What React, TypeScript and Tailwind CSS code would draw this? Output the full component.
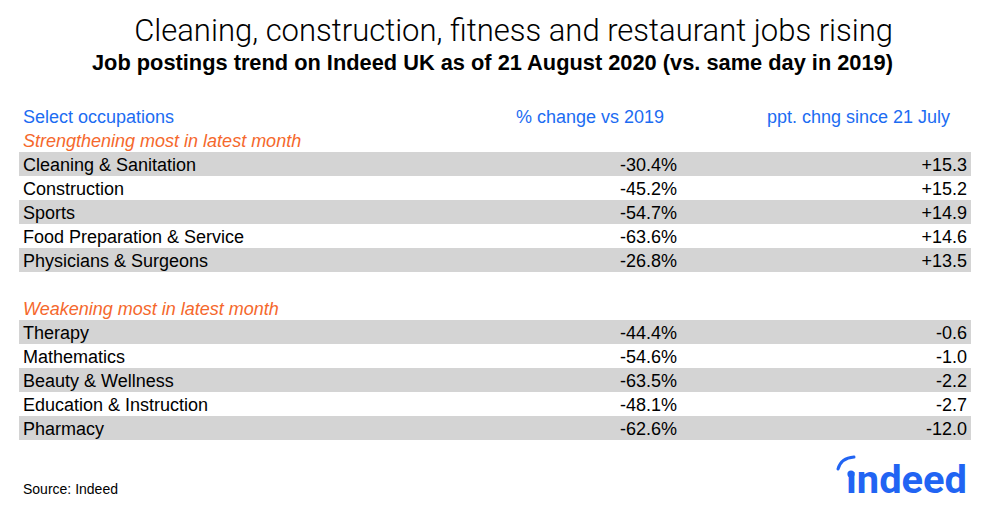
import React from "react";

type Row = { name: string; pct: string; ppt: string };

const strengthening: Row[] = [
  { name: "Cleaning & Sanitation", pct: "-30.4%", ppt: "+15.3" },
  { name: "Construction", pct: "-45.2%", ppt: "+15.2" },
  { name: "Sports", pct: "-54.7%", ppt: "+14.9" },
  { name: "Food Preparation & Service", pct: "-63.6%", ppt: "+14.6" },
  { name: "Physicians & Surgeons", pct: "-26.8%", ppt: "+13.5" },
];

const weakening: Row[] = [
  { name: "Therapy", pct: "-44.4%", ppt: "-0.6" },
  { name: "Mathematics", pct: "-54.6%", ppt: "-1.0" },
  { name: "Beauty & Wellness", pct: "-63.5%", ppt: "-2.2" },
  { name: "Education & Instruction", pct: "-48.1%", ppt: "-2.7" },
  { name: "Pharmacy", pct: "-62.6%", ppt: "-12.0" },
];

function DataRows({ rows }: { rows: Row[] }) {
  return (
    <>
      {rows.map((r, i) => (
        <div
          key={r.name}
          className={`grid grid-cols-[371px_289px_290px] h-[24px] pt-[3px] leading-[21px] text-[18px] text-black ${
            i % 2 === 0 ? "bg-[#d4d4d4]" : "bg-white"
          }`}
        >
          <div className="pl-[4px]">{r.name}</div>
          <div className="text-right pr-[2px]">{r.pct}</div>
          <div className="text-right pr-[2px]">{r.ppt}</div>
        </div>
      ))}
    </>
  );
}

function IndeedLogo() {
  return (
    <svg width="150" height="50" viewBox="0 0 150 50" overflow="visible">
      <path
        d="M8 17 Q11 6 24 5"
        fill="none"
        stroke="#2164f3"
        strokeWidth="3"
        strokeLinecap="round"
      />
      <circle cx="21" cy="22" r="3.6" fill="#2164f3" />
      <text
        x="16"
        y="41"
        fill="#2164f3"
        fontSize="38"
        fontWeight="700"
        fontFamily="Roboto, sans-serif"
        textLength="121"
        lengthAdjust="spacingAndGlyphs"
      >
        ındeed
      </text>
    </svg>
  );
}

export default function App() {
  return (
    <div className="w-[990px] h-[509px] bg-white flex flex-col font-['Liberation_Sans',Arial,sans-serif] overflow-hidden">
      <div className="flex flex-col items-end pr-[97px] pt-[14px]">
        <h1 className="font-['Roboto',sans-serif] font-light text-[31px] leading-[34px] text-black">
          Cleaning, construction, fitness and restaurant jobs rising
        </h1>
        <h2 className="mt-[2px] font-bold text-[21.8px] leading-[26px] text-black">
          Job postings trend on Indeed UK as of 21 August 2020 (vs. same day in 2019)
        </h2>
      </div>

      <div className="mt-[28px] px-[19px]">
        <div className="grid grid-cols-[371px_289px_290px] h-[24px] pt-[3px] leading-[21px] text-[18px] text-[#1c6cf2]">
          <div className="pl-[4px]">Select occupations</div>
          <div className="text-right pr-[15px]">% change vs 2019</div>
          <div className="text-right pr-[19px]">ppt. chng since 21 July</div>
        </div>
        <div className="h-[24px] pt-[3px] pl-[4px] leading-[21px] text-[18px] italic text-[#f5682c]">
          Strengthening most in latest month
        </div>
        <DataRows rows={strengthening} />
        <div className="h-[24px]" />
        <div className="h-[24px] pt-[3px] pl-[4px] leading-[21px] text-[18px] italic text-[#f5682c]">
          Weakening most in latest month
        </div>
        <DataRows rows={weakening} />
      </div>

      <div className="flex justify-between items-start pl-[23px] pr-[10px]">
        <div className="mt-[41px] text-[14px] leading-[16px] text-black">Source: Indeed</div>
        <div className="mt-[12px]">
          <IndeedLogo />
        </div>
      </div>
    </div>
  );
}
